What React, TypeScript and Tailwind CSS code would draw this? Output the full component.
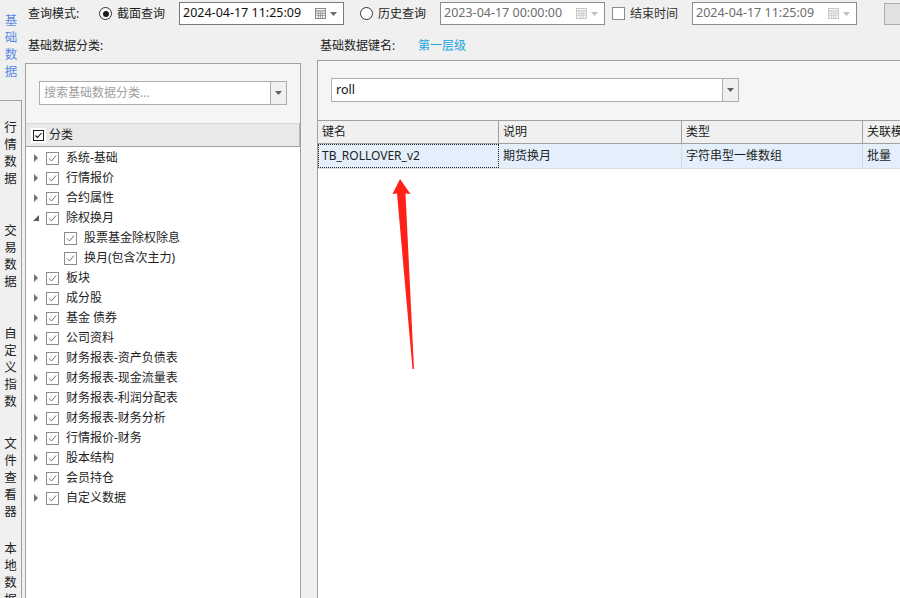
import React from "react";

function Radio({ checked }: { checked?: boolean }) {
  return (
    <span className="flex h-[13px] w-[13px] shrink-0 items-center justify-center rounded-full border border-[#333333] bg-white">
      {checked && <span className="h-[6px] w-[6px] rounded-full bg-[#1a1a1a]" />}
    </span>
  );
}

function Calendar({ dim }: { dim?: boolean }) {
  const c = dim ? "#c8c8c8" : "#8a8a8a";
  return (
    <svg width="11" height="11" viewBox="0 0 11 11" className="shrink-0">
      <rect x="0.5" y="0.5" width="10" height="10" fill="#f6f6f6" stroke={c} />
      <path d="M1 3h9" stroke={c} strokeWidth="1.2" />
      <path d="M3.5 4v6M5.5 4v6M7.5 4v6M1 5.5h9M1 7.5h9" stroke={c} strokeWidth="0.7" />
    </svg>
  );
}

function DownArrow({ color = "#5a5a5a" }: { color?: string }) {
  return (
    <svg width="7" height="4" viewBox="0 0 7 4" className="shrink-0">
      <path d="M0 0h7L3.5 4z" fill={color} />
    </svg>
  );
}

function DateBox({ value, disabled }: { value: string; disabled?: boolean }) {
  return (
    <div
      className={
        disabled
          ? "flex h-[23px] w-[165px] shrink-0 items-center border border-[#8c8c8c] bg-white pl-[3px] pr-[6px] text-[#6d6d6d]"
          : "flex h-[23px] w-[165px] shrink-0 items-center border border-[#7a7a7a] bg-white pl-[3px] pr-[6px] text-[#111111]"
      }
    >
      <span className="flex-1 text-[12.5px] leading-none">{value}</span>
      <Calendar dim={disabled} />
      <span className="ml-[4px]">
        <DownArrow color={disabled ? "#c0c0c0" : "#6a6a6a"} />
      </span>
    </div>
  );
}

function TreeCheck() {
  return (
    <span className="flex h-[13px] w-[13px] shrink-0 items-center justify-center border border-[#8b8b8b] bg-white">
      <svg width="11" height="11" viewBox="0 0 11 11">
        <path d="M2 5.5l2.5 2.5L9 2.5" fill="none" stroke="#6b6b6b" strokeWidth="1" />
      </svg>
    </span>
  );
}

function Combo({ text, placeholder, width }: { text?: string; placeholder?: string; width: string }) {
  return (
    <div className={`flex h-[24px] shrink-0 border border-[#abadb3] bg-white ${width}`}>
      <div className="flex flex-1 items-center pl-[4px]">
        {text ? (
          <span className="text-[12.5px] text-[#111111]">{text}</span>
        ) : (
          <span className="text-[12px] text-[#a0a0a0]">{placeholder}</span>
        )}
      </div>
      <div className="flex w-[16px] items-center justify-center border-l border-[#abadb3] bg-[#f0f0f0]">
        <DownArrow color="#606060" />
      </div>
    </div>
  );
}

const tree = [
  { t: "系统-基础" },
  { t: "行情报价" },
  { t: "合约属性" },
  { t: "除权换月", open: true },
  { t: "股票基金除权除息", child: true },
  { t: "换月(包含次主力)", child: true },
  { t: "板块" },
  { t: "成分股" },
  { t: "基金 债券" },
  { t: "公司资料" },
  { t: "财务报表-资产负债表" },
  { t: "财务报表-现金流量表" },
  { t: "财务报表-利润分配表" },
  { t: "财务报表-财务分析" },
  { t: "行情报价-财务" },
  { t: "股本结构" },
  { t: "会员持仓" },
  { t: "自定义数据" },
];

const sideTabs = [
  { t: "行情数据", h: "h-[103px]" },
  { t: "交易数据", h: "h-[103px]" },
  { t: "自定义指数", h: "h-[110px]" },
  { t: "文件查看器", h: "h-[105px]" },
  { t: "本地数据", h: "h-[105px]" },
];

function VText({ text }: { text: string }) {
  return (
    <div className="flex flex-col items-center">
      {text.split("").map((ch, i) => (
        <div key={i} className="text-[12.5px] leading-[17px]">
          {ch}
        </div>
      ))}
    </div>
  );
}

export default function App() {
  return (
    <div className="relative flex h-[598px] w-[900px] overflow-hidden bg-[#f0f0f0] font-['Noto_Sans','Noto_Sans_CJK_SC',sans-serif] text-[12px] text-[#1e1e1e]">
      {/* side tabs */}
      <div className="flex w-[22px] shrink-0 flex-col">
        <div className="h-[100px] shrink-0 pt-[12px] text-[#5a8be2]">
          <VText text="基础数据" />
        </div>
        <div className="flex-1 border-r border-t border-[#a0a0a0] text-[#222222]">
          {sideTabs.map((s) => (
            <div key={s.t} className={`${s.h} pt-[18px]`}>
              <VText text={s.t} />
            </div>
          ))}
        </div>
      </div>

      <div className="flex min-w-0 flex-1 flex-col">
        {/* query bar */}
        <div className="flex h-[27px] shrink-0 items-center">
          <span className="ml-[6px] w-[71px] shrink-0">查询模式:</span>
          <Radio checked />
          <span className="ml-[5px] w-[62px] shrink-0">截面查询</span>
          <DateBox value="2024-04-17 11:25:09" />
          <span className="ml-[16px]">
            <Radio />
          </span>
          <span className="ml-[5px] w-[62px] shrink-0">历史查询</span>
          <DateBox value="2023-04-17 00:00:00" disabled />
          <span className="ml-[7px] h-[13px] w-[13px] shrink-0 border border-[#8b8b8b] bg-white" />
          <span className="ml-[5px] w-[62px] shrink-0 text-[#333333]">结束时间</span>
          <DateBox value="2024-04-17 11:25:09" disabled />
          <button className="ml-[27px] h-[22px] w-[40px] shrink-0 border border-[#adadad] bg-[#e1e1e1]" />
        </div>

        <div className="flex min-h-0 flex-1">
          {/* left column */}
          <div className="flex w-[295px] shrink-0 flex-col">
            <div className="h-[36px] shrink-0 pl-[6px] pt-[10px] leading-[17px]">基础数据分类:</div>
            <div className="ml-[3px] flex w-[276px] flex-1 flex-col border border-b-0 border-[#a0a0a0] bg-[#f5f5f5]">
              <div className="ml-[13px] mt-[17px]">
                <Combo placeholder="搜索基础数据分类..." width="w-[248px]" />
              </div>
              <div className="mt-[18px] flex h-[24px] shrink-0 items-center border-b border-r border-t border-b-[#a0a0a0] border-r-[#b4b4b4] border-t-[#d8d8d8] bg-[#e9e9e9] pl-[7px]">
                <span className="flex h-[11px] w-[11px] items-center justify-center border border-[#1e1e1e] bg-white outline outline-2 outline-white">
                  <svg width="9" height="9" viewBox="0 0 9 9">
                    <path d="M1.5 4.5l2 2L7.5 2" fill="none" stroke="#111" strokeWidth="1.1" />
                  </svg>
                </span>
                <span className="ml-[5px]">分类</span>
              </div>
              <div className="flex-1 bg-white pt-[1px]">
                {tree.map((n) => (
                  <div key={n.t} className={`flex h-[20px] items-center ${n.child ? "pl-[38px]" : ""}`}>
                    {!n.child && (
                      <span className="flex w-[20px] shrink-0 items-center pl-[7px]">
                        {n.open ? (
                          <svg width="6" height="6" viewBox="0 0 6 6">
                            <path d="M6 0v6H0z" fill="#595959" />
                          </svg>
                        ) : (
                          <svg width="6" height="8" viewBox="0 0 6 8">
                            <path d="M1 0l4 4-4 4z" fill="#707070" />
                          </svg>
                        )}
                      </span>
                    )}
                    <TreeCheck />
                    <span className="ml-[7px] whitespace-pre">{n.t}</span>
                  </div>
                ))}
              </div>
            </div>
          </div>

          {/* right column */}
          <div className="flex min-w-0 flex-1 flex-col">
            <div className="flex h-[33px] shrink-0 pl-[3px] pt-[10px] leading-[17px]">
              <span className="w-[98px] shrink-0">基础数据键名:</span>
              <span className="text-[#1ba3e0]">第一层级</span>
            </div>
            <div className="flex min-w-0 flex-1 flex-col overflow-hidden border-l border-t border-[#a0a0a0] bg-[#f5f5f5]">
              <div className="ml-[13px] mt-[17px]">
                <Combo text="roll" width="w-[408px]" />
              </div>
              <div className="mt-[18px] flex h-[24px] shrink-0 overflow-hidden whitespace-nowrap border-b border-t border-[#a0a0a0] bg-[#f0f0f0]">
                <div className="flex w-[181px] shrink-0 items-center border-r border-[#a0a0a0] pl-[4px]">键名</div>
                <div className="flex w-[183px] shrink-0 items-center border-r border-[#a0a0a0] pl-[4px]">说明</div>
                <div className="flex w-[181px] shrink-0 items-center border-r border-[#a0a0a0] pl-[4px]">类型</div>
                <div className="flex w-[120px] shrink-0 items-center pl-[4px]">关联模块</div>
              </div>
              <div className="flex-1 bg-white">
                <div className="flex h-[25px] overflow-hidden whitespace-nowrap border-b border-[#d5dde6] bg-[#e3effa]">
                  <div className="flex w-[181px] shrink-0 items-center border border-dotted border-[#222222] pl-[3px]">
                    TB_ROLLOVER_v2
                  </div>
                  <div className="flex w-[183px] shrink-0 items-center border-r border-[#cfd9e3] pl-[4px]">期货换月</div>
                  <div className="flex w-[181px] shrink-0 items-center border-r border-[#cfd9e3] pl-[4px]">字符串型一维数组</div>
                  <div className="flex w-[120px] shrink-0 items-center pl-[4px]">批量</div>
                </div>
              </div>
            </div>
          </div>
        </div>
      </div>

      {/* annotation arrow */}
      <svg className="pointer-events-none absolute left-0 top-0" width="900" height="598" viewBox="0 0 900 598">
        <path d="M400 179 L410.5 194 L405.5 193.5 L414 369 L412.5 369 L397 193.5 L392.5 194 Z" fill="#ff2218" />
      </svg>
    </div>
  );
}
